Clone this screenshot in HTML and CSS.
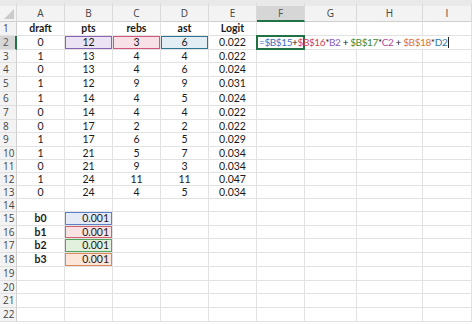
FILE: index.html
```html
<!DOCTYPE html>
<html lang="en">
<head>
    <meta charset="UTF-8">
    <title>Logit</title>
    <link rel="stylesheet" href="styles.css">
</head>
<body>
    <div class="sheet">
        <!-- column headers -->
        <div class="corner"><span class="tri"></span></div>
        <div class="colhead">A</div>
        <div class="colhead">B</div>
        <div class="colhead">C</div>
        <div class="colhead">D</div>
        <div class="colhead">E</div>
        <div class="colhead sel">F</div>
        <div class="colhead">G</div>
        <div class="colhead">H</div>
        <div class="colhead">I</div>

        <div class="rowhead">1</div>
        <div class="cell b">draft</div><div class="cell b">pts</div><div class="cell b">rebs</div><div class="cell b">ast</div><div class="cell b">Logit</div>
        <div class="cell"></div><div class="cell"></div><div class="cell"></div><div class="cell"></div>

        <div class="rowhead sel">2</div>
        <div class="cell">0</div>
        <div class="cell ref-purple">12</div>
        <div class="cell ref-pink">3</div>
        <div class="cell ref-teal">6</div>
        <div class="cell">0.022</div>
        <div class="cell editing"><span class="formula"><span class="f-blue">=$B$15</span>+<span class="f-red">$B$16</span>*<span class="f-purple">B2</span> + <span class="f-green">$B$17</span>*<span class="f-pink">C2</span> + <span class="f-orange">$B$18</span>*<span class="f-teal">D2</span><span class="caret"></span></span></div>

        <div class="rowhead">3</div>
        <div class="cell">1</div><div class="cell">13</div><div class="cell">4</div><div class="cell">4</div><div class="cell">0.022</div>
        <div class="cell"></div><div class="cell"></div><div class="cell"></div><div class="cell"></div>

        <div class="rowhead">4</div>
        <div class="cell">0</div><div class="cell">13</div><div class="cell">4</div><div class="cell">6</div><div class="cell">0.024</div>
        <div class="cell"></div><div class="cell"></div><div class="cell"></div><div class="cell"></div>

        <div class="rowhead">5</div>
        <div class="cell">1</div><div class="cell">12</div><div class="cell">9</div><div class="cell">9</div><div class="cell">0.031</div>
        <div class="cell"></div><div class="cell"></div><div class="cell"></div><div class="cell"></div>

        <div class="rowhead">6</div>
        <div class="cell">1</div><div class="cell">14</div><div class="cell">4</div><div class="cell">5</div><div class="cell">0.024</div>
        <div class="cell"></div><div class="cell"></div><div class="cell"></div><div class="cell"></div>

        <div class="rowhead">7</div>
        <div class="cell">0</div><div class="cell">14</div><div class="cell">4</div><div class="cell">4</div><div class="cell">0.022</div>
        <div class="cell"></div><div class="cell"></div><div class="cell"></div><div class="cell"></div>

        <div class="rowhead">8</div>
        <div class="cell">0</div><div class="cell">17</div><div class="cell">2</div><div class="cell">2</div><div class="cell">0.022</div>
        <div class="cell"></div><div class="cell"></div><div class="cell"></div><div class="cell"></div>

        <div class="rowhead">9</div>
        <div class="cell">1</div><div class="cell">17</div><div class="cell">6</div><div class="cell">5</div><div class="cell">0.029</div>
        <div class="cell"></div><div class="cell"></div><div class="cell"></div><div class="cell"></div>

        <div class="rowhead">10</div>
        <div class="cell">1</div><div class="cell">21</div><div class="cell">5</div><div class="cell">7</div><div class="cell">0.034</div>
        <div class="cell"></div><div class="cell"></div><div class="cell"></div><div class="cell"></div>

        <div class="rowhead">11</div>
        <div class="cell">0</div><div class="cell">21</div><div class="cell">9</div><div class="cell">3</div><div class="cell">0.034</div>
        <div class="cell"></div><div class="cell"></div><div class="cell"></div><div class="cell"></div>

        <div class="rowhead">12</div>
        <div class="cell">1</div><div class="cell">24</div><div class="cell">11</div><div class="cell">11</div><div class="cell">0.047</div>
        <div class="cell"></div><div class="cell"></div><div class="cell"></div><div class="cell"></div>

        <div class="rowhead">13</div>
        <div class="cell">0</div><div class="cell">24</div><div class="cell">4</div><div class="cell">5</div><div class="cell">0.034</div>
        <div class="cell"></div><div class="cell"></div><div class="cell"></div><div class="cell"></div>

        <div class="rowhead">14</div>
        <div class="cell"></div><div class="cell"></div><div class="cell"></div><div class="cell"></div><div class="cell"></div>
        <div class="cell"></div><div class="cell"></div><div class="cell"></div><div class="cell"></div>

        <div class="rowhead">15</div>
        <div class="cell b">b0</div><div class="cell num ref-blue">0.001</div><div class="cell"></div><div class="cell"></div><div class="cell"></div>
        <div class="cell"></div><div class="cell"></div><div class="cell"></div><div class="cell"></div>

        <div class="rowhead">16</div>
        <div class="cell b">b1</div><div class="cell num ref-red">0.001</div><div class="cell"></div><div class="cell"></div><div class="cell"></div>
        <div class="cell"></div><div class="cell"></div><div class="cell"></div><div class="cell"></div>

        <div class="rowhead">17</div>
        <div class="cell b">b2</div><div class="cell num ref-green">0.001</div><div class="cell"></div><div class="cell"></div><div class="cell"></div>
        <div class="cell"></div><div class="cell"></div><div class="cell"></div><div class="cell"></div>

        <div class="rowhead">18</div>
        <div class="cell b">b3</div><div class="cell num ref-orange">0.001</div><div class="cell"></div><div class="cell"></div><div class="cell"></div>
        <div class="cell"></div><div class="cell"></div><div class="cell"></div><div class="cell"></div>

        <div class="rowhead">19</div>
        <div class="cell"></div><div class="cell"></div><div class="cell"></div><div class="cell"></div><div class="cell"></div>
        <div class="cell"></div><div class="cell"></div><div class="cell"></div><div class="cell"></div>

        <div class="rowhead">20</div>
        <div class="cell"></div><div class="cell"></div><div class="cell"></div><div class="cell"></div><div class="cell"></div>
        <div class="cell"></div><div class="cell"></div><div class="cell"></div><div class="cell"></div>

        <div class="rowhead">21</div>
        <div class="cell"></div><div class="cell"></div><div class="cell"></div><div class="cell"></div><div class="cell"></div>
        <div class="cell"></div><div class="cell"></div><div class="cell"></div><div class="cell"></div>

        <div class="rowhead">22</div>
        <div class="cell"></div><div class="cell"></div><div class="cell"></div><div class="cell"></div><div class="cell"></div>
        <div class="cell"></div><div class="cell"></div><div class="cell"></div><div class="cell"></div>
    </div>
</body>
</html>
```

FILE: styles.css
```css
body {
    margin: 0;
    background: #fff;
    font-family: 'Lato', 'Liberation Sans', sans-serif;
    font-size: 10.5px;
    color: #1a1a1a;
    overflow: hidden;
}
.sheet {
    display: grid;
    grid-template-columns: 17px 48px 48px 48px 48px 48px 48px 52px 66px 49px;
    grid-template-rows: 22px 14px 14px 13px 14px 15px 14px 14px 13px 14px 13px 13px 13px 13px 13px 14px 13px 14px 14px 14px 13px 14px 14px;
    width: 472px;
}
.corner,
.colhead {
    background: #f3f3f3;
    border-top: 6px solid #e9e9e9;
    border-right: 1px solid #d9d9d9;
    border-bottom: 1px solid #cfcfcf;
    box-sizing: border-box;
    color: #444;
    font-family: 'Open Sans', sans-serif;
    font-size: 10px;
    text-align: center;
    line-height: 14px;
    position: relative;
}
.corner .tri {
    position: absolute;
    right: 2px;
    bottom: 2px;
    width: 0;
    height: 0;
    border-left: 10px solid transparent;
    border-bottom: 10px solid #cbcbcb;
}
.colhead.sel {
    background: #d6d6d6;
    border-bottom: 2px solid #217346;
    color: #555;
}
.rowhead {
    background: #f3f3f3;
    border-right: 1px solid #cfcfcf;
    border-bottom: 1px solid #e0e0e0;
    box-sizing: border-box;
    color: #444;
    font-family: 'Open Sans', sans-serif;
    font-size: 10px;
    padding-left: 3px;
    line-height: 13px;
}
.rowhead.sel {
    background: #d6d6d6;
    border-right: 2px solid #217346;
    color: #555;
}
.cell {
    border-right: 1px solid #e2e2e2;
    border-bottom: 1px solid #e2e2e2;
    box-sizing: border-box;
    text-align: center;
    line-height: 13px;
    white-space: nowrap;
}
.cell.b {
    font-weight: bold;
}
.cell.num {
    text-align: right;
    padding-right: 3px;
}
.ref-purple { background: #ece4f5; box-shadow: inset 0 0 0 1px #8a64b4; }
.ref-pink   { background: #f9e1e8; box-shadow: inset 0 0 0 1px #d2577a; }
.ref-teal   { background: #e2eef4; box-shadow: inset 0 0 0 1px #2e7494; }
.ref-blue   { background: #e4ebf7; box-shadow: inset 0 0 0 1px #5b83c6; }
.ref-red    { background: #f8e2e4; box-shadow: inset 0 0 0 1px #cf6470; }
.ref-green  { background: #e2f0de; box-shadow: inset 0 0 0 1px #56a35c; }
.ref-orange { background: #fbe6d9; box-shadow: inset 0 0 0 1px #d9895a; }

.cell.editing {
    grid-column: span 4;
    text-align: left;
    padding-left: 2px;
    position: relative;
    color: #1a1a1a;
}
.cell.editing::before {
    content: '';
    position: absolute;
    left: -1px;
    top: -1px;
    width: 49px;
    height: 15px;
    border: 2px solid #217346;
    box-sizing: border-box;
}
.formula {
    position: relative;
    font-size: 10px;
    letter-spacing: -0.4px;
}
.f-blue   { color: #3d6fc4; }
.f-red    { color: #d2414f; }
.f-purple { color: #8a5cb8; }
.f-green  { color: #3b8c3b; }
.f-pink   { color: #b04aa0; }
.f-orange { color: #d9752f; }
.f-teal   { color: #2f78a8; }
.caret {
    display: inline-block;
    width: 1px;
    height: 11px;
    margin-left: 1px;
    background: #222;
    vertical-align: -2px;
}
```
